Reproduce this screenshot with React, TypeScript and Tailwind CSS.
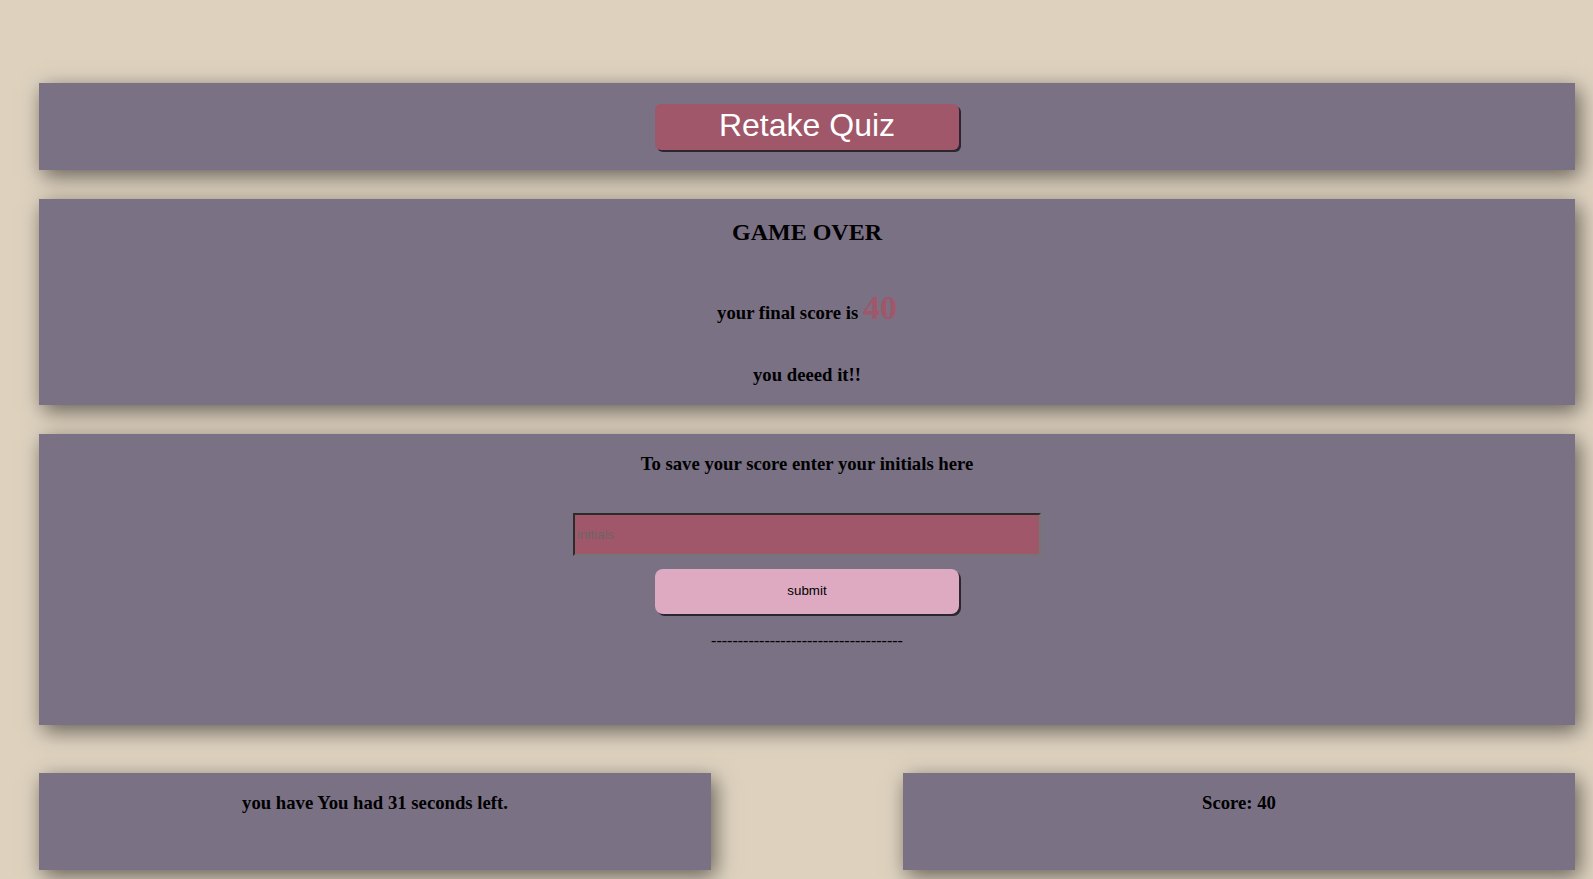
import { useState } from "react";

const panel = "bg-[#7a7185] shadow-[4px_6px_20px_rgba(0,0,0,0.55)]";

export default function App() {
  const [initials, setInitials] = useState("");
  const score = 40;
  const secondsLeft = 31;

  return (
    <div className="min-h-screen bg-[#ded2bf] pt-[83px] pl-[39px] font-['Liberation_Serif',serif] text-black">
      <div className="flex w-[1536px] flex-col">
        <section className={`${panel} flex h-[87px] items-center justify-center`}>
          <button
            type="button"
            className="h-[46px] w-[304px] rounded-[6px] bg-[#a05769] pb-[3px] font-['Liberation_Sans',Arial,sans-serif] text-[32px] leading-none text-white shadow-[2px_2px_0_#2b2630]"
          >
            Retake Quiz
          </button>
        </section>

        <section className={`${panel} mt-[29px] flex h-[206px] flex-col items-center pt-[19px]`}>
          <h2 className="text-[24px] leading-[28px] font-bold">GAME OVER</h2>
          <p className="mt-[45px] text-[18.72px] leading-[40px] font-bold">
            your final score is <span className="text-[34px] leading-none text-[#a05769]">{score}</span>
          </p>
          <p className="mt-[31px] text-[18.72px] leading-[22px] font-bold">you deeed it!!</p>
        </section>

        <section className={`${panel} mt-[29px] flex h-[291px] flex-col items-center pt-[18.7px]`}>
          <h3 className="text-[18.72px] leading-[22px] font-bold">To save your score enter your initials here</h3>
          <input
            type="text"
            value={initials}
            onChange={(event) => setInitials(event.target.value)}
            placeholder="initials"
            className="mt-[38px] h-[43px] w-[468px] border-2 border-t-[#2b2b2b] border-r-[#757575] border-b-[#757575] border-l-[#2b2b2b] bg-[#9f5769] px-[2px] font-['Liberation_Sans',Arial,sans-serif] text-[13.33px] outline-none placeholder:text-[#6e6566]"
          />
          <button
            type="button"
            className="mt-[13px] h-[45px] w-[304px] rounded-[8px] bg-[#deaac2] font-['Liberation_Sans',Arial,sans-serif] text-[13.33px] text-black shadow-[2px_2px_0_#2b2630]"
          >
            submit
          </button>
          <p className="mt-[18.5px] text-[16px] leading-[18px]">------------------------------------</p>
        </section>

        <div className="mt-[48px] flex justify-between">
          <section className={`${panel} flex h-[97px] w-[672px] flex-col items-center pt-[18.7px]`}>
            <h3 className="text-[18.72px] leading-[22px] font-bold">you have You had {secondsLeft} seconds left.</h3>
          </section>
          <section className={`${panel} flex h-[97px] w-[672px] flex-col items-center pt-[18.7px]`}>
            <h3 className="text-[18.72px] leading-[22px] font-bold">Score: {score}</h3>
          </section>
        </div>
      </div>
    </div>
  );
}
